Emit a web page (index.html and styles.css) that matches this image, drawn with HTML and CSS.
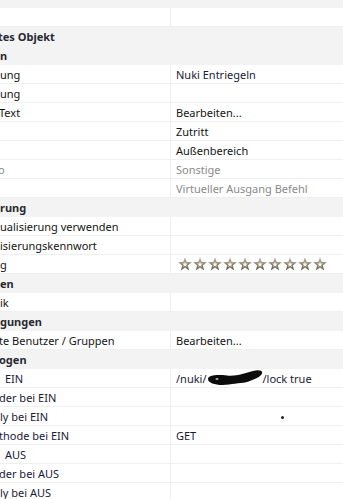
FILE: index.html
```html
<!DOCTYPE html>
<html lang="de">
<head>
    <meta charset="utf-8">
    <link rel="stylesheet" href="styles.css">
</head>
<body>
    <svg width="0" height="0" class="defs">
        <defs>
            <linearGradient id="starGrad" x1="0" y1="0" x2="0" y2="1">
                <stop offset="0" stop-color="#bdb6a2"/>
                <stop offset="1" stop-color="#655e4c"/>
            </linearGradient>
            <symbol id="star" viewBox="0 0 14 14">
                <polygon fill="url(#starGrad)" points="7,0.2 8.75,5.0 13.9,5.2 9.85,8.45 11.25,13.5 7,10.6 2.75,13.5 4.15,8.45 0.1,5.2 5.25,5.0"/>
                <polygon fill="#f6f4ef" points="7,4.6 7.7,6.55 9.8,6.6 8.15,7.9 8.75,9.9 7,8.75 5.25,9.9 5.85,7.9 4.2,6.6 6.3,6.55"/>
            </symbol>
        </defs>
    </svg>

    <div class="grid">
        <div class="cat"><span></span></div>
        <div class="row"><div class="key"></div><div class="val"></div></div>
        <div class="cat"><span class="cut2">tes Objekt</span></div>
        <div class="cat"><span>n</span></div>
        <div class="row"><div class="key">ung</div><div class="val navy">Nuki Entriegeln</div></div>
        <div class="row"><div class="key">ung</div><div class="val"></div></div>
        <div class="row"><div class="key"><span class="cut1">Text</span></div><div class="val">Bearbeiten...</div></div>
        <div class="row"><div class="key"></div><div class="val">Zutritt</div></div>
        <div class="row"><div class="key"></div><div class="val">Außenbereich</div></div>
        <div class="row"><div class="key muted"><span class="cut2">o</span></div><div class="val muted">Sonstige</div></div>
        <div class="row"><div class="key"></div><div class="val muted">Virtueller Ausgang Befehl</div></div>
        <div class="cat"><span>rung</span></div>
        <div class="row"><div class="key">ualisierung verwenden</div><div class="val"></div></div>
        <div class="row"><div class="key">isierungskennwort</div><div class="val"></div></div>
        <div class="row">
            <div class="key">g</div>
            <div class="val stars">
                <svg class="star"><use href="#star"/></svg>
                <svg class="star"><use href="#star"/></svg>
                <svg class="star"><use href="#star"/></svg>
                <svg class="star"><use href="#star"/></svg>
                <svg class="star"><use href="#star"/></svg>
                <svg class="star"><use href="#star"/></svg>
                <svg class="star"><use href="#star"/></svg>
                <svg class="star"><use href="#star"/></svg>
                <svg class="star"><use href="#star"/></svg>
                <svg class="star"><use href="#star"/></svg>
            </div>
        </div>
        <div class="cat"><span>en</span></div>
        <div class="row"><div class="key">ik</div><div class="val"></div></div>
        <div class="cat"><span>gungen</span></div>
        <div class="row"><div class="key"><span class="cut1">te Benutzer / Gruppen</span></div><div class="val">Bearbeiten...</div></div>
        <div class="cat"><span class="cut1">ogen</span></div>
        <div class="row">
            <div class="key navy"><span class="lead">EIN</span></div>
            <div class="val navy">/nuki/<span class="redact"><svg width="56" height="17" viewBox="0 0 56 17"><path d="M1 9 C1 5 10 4.5 20 5.5 C30 6.5 38 3 46 1 C52 -0.5 56 0.5 55 3.5 C54 6.5 49 8.5 44 10.5 C38 13.5 30 13 22 14.5 C12 16 1 14 1 9 Z" fill="#0c0c0c"/><ellipse cx="10" cy="9" rx="1.6" ry="0.8" fill="#e8e8e8"/></svg></span>/lock true</div>
        </div>
        <div class="row"><div class="key navy"><span class="cut1">der bei EIN</span></div><div class="val"></div></div>
        <div class="row"><div class="key navy">ly bei EIN</div><div class="val"><span class="dot"></span></div></div>
        <div class="row"><div class="key navy"><span class="cut1">thode bei EIN</span></div><div class="val navy">GET</div></div>
        <div class="row"><div class="key navy"><span class="lead">AUS</span></div><div class="val"></div></div>
        <div class="row"><div class="key navy"><span class="cut1">der bei AUS</span></div><div class="val"></div></div>
        <div class="row"><div class="key navy">ly bei AUS</div><div class="val"></div></div>
    </div>
</body>
</html>
```

FILE: styles.css
```css
body {
    margin: 0;
    background-color: #fff;
    font-family: "Noto Sans", "Open Sans", sans-serif;
    font-size: 11px;
    color: #141414;
    overflow: hidden;
}

.defs {
    position: absolute;
}

.grid {
    margin-top: -11px;
}

.row {
    display: grid;
    grid-template-columns: 171px 1fr;
    height: 19px;
    border-bottom: 1px solid #efefef;
    box-sizing: border-box;
    line-height: 19px;
}

.key {
    border-right: 1px solid #efefef;
    overflow: hidden;
    white-space: nowrap;
}

.val {
    padding-left: 5px;
    white-space: nowrap;
    overflow: hidden;
}

.cat {
    height: 19px;
    background-color: #f3f3f3;
    line-height: 19px;
    font-weight: 700;
    color: #2a2a34;
    white-space: nowrap;
    overflow: hidden;
}

.navy {
    color: #1a1a38;
}

.muted {
    color: #8a8a8a;
}

.cut1 { margin-left: -1px; }
.cut2 { margin-left: -2px; }

.lead {
    padding-left: 5px;
}

/* rating */
.stars {
    display: flex;
    align-items: center;
    gap: 1px;
    padding-left: 7px;
}

.star {
    width: 14px;
    height: 14px;
}

.redact {
    display: inline-block;
    width: 56px;
    height: 17px;
    vertical-align: -4px;
}

.redact svg {
    display: block;
}

.dot {
    display: inline-block;
    width: 3px;
    height: 3px;
    border-radius: 50%;
    background-color: #222;
    margin-left: 105px;
    vertical-align: 2px;
}
```
